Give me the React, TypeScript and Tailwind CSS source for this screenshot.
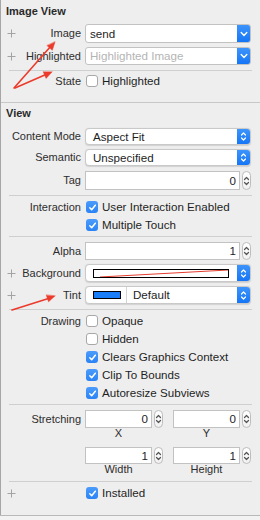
import React from "react";

const FONT = { fontFamily: '"Liberation Sans", Arial, Helvetica, sans-serif' };

function Plus() {
  return (
    <svg width="9" height="9" viewBox="0 0 9 9" className="shrink-0">
      <path d="M4.5 0.5 V8.5 M0.5 4.5 H8.5" stroke="#a3a3a3" strokeWidth="1" />
    </svg>
  );
}

function Row({
  plus,
  label,
  className,
  children,
}: {
  plus?: boolean;
  label?: string;
  className: string;
  children?: React.ReactNode;
}) {
  return (
    <div className={"flex items-stretch shrink-0 " + className}>
      <div className="w-[80px] shrink-0 flex items-center pl-[6px]">
        {plus ? <Plus /> : null}
        <span className="ml-auto text-[11px] leading-none text-[#2d2d2d] whitespace-nowrap">{label}</span>
      </div>
      <div className="ml-[4px] w-[166px] shrink-0 flex items-stretch">{children}</div>
    </div>
  );
}

function Divider({ className }: { className: string }) {
  return <div className={"h-px bg-[#cfcfcf] ml-[8px] mr-[8px] shrink-0 " + className} />;
}

function ChevronDown() {
  return (
    <svg width="8" height="6" viewBox="0 0 8 6">
      <path d="M1.2 1.6 L4 4.4 L6.8 1.6" stroke="white" strokeWidth="1.4" fill="none" strokeLinecap="round" strokeLinejoin="round" />
    </svg>
  );
}

function UpDown({ color = "white", w = 7, h = 11 }: { color?: string; w?: number; h?: number }) {
  return (
    <svg width={w} height={h} viewBox="0 0 7 11">
      <path d="M1.5 4 L3.5 2 L5.5 4 M1.5 7 L3.5 9 L5.5 7" stroke={color} strokeWidth="1.2" fill="none" strokeLinecap="round" strokeLinejoin="round" />
    </svg>
  );
}

function BlueBtn({ updown }: { updown?: boolean }) {
  return (
    <div className="w-[13px] shrink-0 bg-gradient-to-b from-[#3c94fb] to-[#1475f5] flex items-center justify-center">
      {updown ? <UpDown /> : <ChevronDown />}
    </div>
  );
}

function Combo({ text, placeholder }: { text?: string; placeholder?: string }) {
  return (
    <div className="flex-1 flex bg-white border border-[#c2c2c2] rounded-[3px] overflow-hidden">
      <div className="flex-1 flex items-center pl-[4px]">
        {text ? (
          <span className="text-[11.6px] leading-none text-[#1e1e1e]">{text}</span>
        ) : (
          <span className="text-[11.6px] leading-none text-[#b4b4b4]">{placeholder}</span>
        )}
      </div>
      <BlueBtn />
    </div>
  );
}

function Popup({ children }: { children: React.ReactNode }) {
  return (
    <div className="flex-1 flex bg-white border border-[#c9c9c9] rounded-[4px] overflow-hidden shadow-[0_0.5px_1px_rgba(0,0,0,0.12)]">
      <div className="flex-1 flex items-center">{children}</div>
      <BlueBtn updown />
    </div>
  );
}

function Stepper() {
  return (
    <div className="w-[9px] shrink-0 rounded-[5px] border border-[#bdbdbd] bg-gradient-to-b from-white to-[#f1f1f1] flex items-center justify-center">
      <UpDown color="#555555" w={7} h={12} />
    </div>
  );
}

function NumField({ value, className }: { value: string; className: string }) {
  return (
    <div className={"bg-white border border-[#c2c2c2] flex items-center justify-end pr-[3px] shrink-0 " + className}>
      <span className="text-[11.6px] leading-none text-[#1e1e1e]">{value}</span>
    </div>
  );
}

function Check({ checked, text }: { checked: boolean; text: string }) {
  return (
    <div className="flex items-center">
      {checked ? (
        <span className="ml-[1px] w-[12px] h-[12px] rounded-[3px] bg-gradient-to-b from-[#4a9bfb] to-[#2a83f6] flex items-center justify-center">
          <svg width="9" height="9" viewBox="0 0 9 9">
            <path d="M1.8 4.8 L3.7 6.8 L7.3 2.2" stroke="white" strokeWidth="1.5" fill="none" strokeLinecap="round" strokeLinejoin="round" />
          </svg>
        </span>
      ) : (
        <span className="ml-[1px] w-[12px] h-[12px] rounded-[3px] bg-white border border-[#a8a8a8]" />
      )}
      <span className="ml-[4px] text-[11.6px] leading-none text-[#1e1e1e] whitespace-nowrap">{text}</span>
    </div>
  );
}

export default function App() {
  return (
    <div className="relative w-[260px] h-[520px] bg-[#eeeeee] flex flex-col overflow-hidden" style={FONT}>
      <div className="flex flex-col h-[515px] shrink-0 border-l border-[#a6a6a6]">
        {/* Image View */}
        <div className="h-[22px] shrink-0 flex items-center pl-[5px]">
          <span className="text-[11px] font-bold leading-none text-[#2a2a2a]">Image View</span>
        </div>
        <Row plus label="Image" className="mt-[2px] h-[19px]">
          <Combo text="send" />
        </Row>
        <Row plus label="Highlighted" className="mt-[4px] h-[18px]">
          <Combo placeholder="Highlighted Image" />
        </Row>
        <Divider className="mt-[5px]" />
        <Row label="State" className="mt-[4px] h-[12px]">
          <Check checked={false} text="Highlighted" />
        </Row>
        <div className="mt-[15px] h-px bg-[#c8c8c8] shrink-0" />

        {/* View */}
        <div className="h-[21px] shrink-0 flex items-center pl-[5px]">
          <span className="text-[11px] font-bold leading-none text-[#2a2a2a]">View</span>
        </div>
        <Row label="Content Mode" className="mt-[4px] h-[17px]">
          <Popup>
            <span className="pl-[7px] text-[11.6px] leading-none text-[#1e1e1e]">Aspect Fit</span>
          </Popup>
        </Row>
        <Row label="Semantic" className="mt-[4px] h-[17px]">
          <Popup>
            <span className="pl-[7px] text-[11.6px] leading-none text-[#1e1e1e]">Unspecified</span>
          </Popup>
        </Row>
        <Row label="Tag" className="mt-[5px] h-[19px]">
          <NumField value="0" className="w-[155px]" />
          <div className="ml-[2px] flex"><Stepper /></div>
        </Row>
        <Divider className="mt-[5px]" />
        <Row label="Interaction" className="mt-[5px] h-[12px]">
          <Check checked text="User Interaction Enabled" />
        </Row>
        <Row className="mt-[6px] h-[12px]">
          <Check checked text="Multiple Touch" />
        </Row>
        <Divider className="mt-[5px]" />
        <Row label="Alpha" className="mt-[5px] h-[18px]">
          <NumField value="1" className="w-[155px]" />
          <div className="ml-[2px] flex"><Stepper /></div>
        </Row>
        <Row plus label="Background" className="mt-[4px] h-[18px]">
          <Popup>
            <div className="ml-[7px] w-[136px] h-[9px] bg-white border border-black relative">
              <svg className="absolute inset-0" width="134" height="7" viewBox="0 0 134 7" preserveAspectRatio="none">
                <line x1="6" y1="7" x2="134" y2="0" stroke="#e53b2c" strokeWidth="1" />
              </svg>
            </div>
          </Popup>
        </Row>
        <Row plus label="Tint" className="mt-[4px] h-[18px]">
          <Popup>
            <div className="h-full flex items-center">
              <div className="ml-[7px] w-[28px] h-[8px] bg-[#1a7ef9] border border-black" />
              <div className="ml-[5px] w-px h-full bg-[#d4d4d4]" />
              <span className="ml-[6px] text-[11.6px] leading-none text-[#1e1e1e]">Default</span>
            </div>
          </Popup>
        </Row>
        <Divider className="mt-[5px]" />
        <Row label="Drawing" className="mt-[5px] h-[12px]">
          <Check checked={false} text="Opaque" />
        </Row>
        <Row className="mt-[6px] h-[12px]">
          <Check checked={false} text="Hidden" />
        </Row>
        <Row className="mt-[6px] h-[12px]">
          <Check checked text="Clears Graphics Context" />
        </Row>
        <Row className="mt-[6px] h-[12px]">
          <Check checked text="Clip To Bounds" />
        </Row>
        <Row className="mt-[6px] h-[12px]">
          <Check checked text="Autoresize Subviews" />
        </Row>
        <Divider className="mt-[5px]" />
        <Row label="Stretching" className="mt-[5px] h-[18px]">
          <NumField value="0" className="w-[67px]" />
          <div className="ml-[2px] flex"><Stepper /></div>
          <NumField value="0" className="ml-[10px] w-[67px]" />
          <div className="ml-[2px] flex"><Stepper /></div>
        </Row>
        <Row className="h-[11px]">
          <div className="w-[67px] flex items-center justify-center text-[11px] leading-none text-[#2d2d2d]">X</div>
          <div className="w-[21px]" />
          <div className="w-[67px] flex items-center justify-center text-[11px] leading-none text-[#2d2d2d]">Y</div>
        </Row>
        <Row className="mt-[8px] h-[17px]">
          <NumField value="1" className="w-[67px]" />
          <div className="ml-[2px] flex"><Stepper /></div>
          <NumField value="1" className="ml-[10px] w-[67px]" />
          <div className="ml-[2px] flex"><Stepper /></div>
        </Row>
        <Row className="h-[11px]">
          <div className="w-[67px] flex items-center justify-center text-[11px] leading-none text-[#2d2d2d]">Width</div>
          <div className="w-[21px]" />
          <div className="w-[67px] flex items-center justify-center text-[11px] leading-none text-[#2d2d2d]">Height</div>
        </Row>
        <Divider className="mt-[6px]" />
        <Row plus className="mt-[5px] h-[12px]">
          <Check checked text="Installed" />
        </Row>
      </div>
      <div className="h-px bg-[#b8b8b8] shrink-0" />
      <div className="flex-1 bg-[#f2f2f2]" />

      <svg className="absolute left-0 top-0 pointer-events-none" width="260" height="520" viewBox="0 0 260 520">
        <g stroke="#ec3b2b" strokeWidth="1.6" strokeLinecap="round" fill="#ec3b2b">
          <line x1="14" y1="88" x2="51" y2="46" />
          <polygon points="55,42 52.3,50.3 47.1,45.7" strokeWidth="0.5" />
          <line x1="15" y1="88" x2="47" y2="74" />
          <polygon points="52,72 46.1,78.4 43.3,72" strokeWidth="0.5" />
          <line x1="12" y1="310" x2="50" y2="298" />
          <polygon points="55,296 48.5,301.8 46.3,295.2" strokeWidth="0.5" />
        </g>
      </svg>
    </div>
  );
}
